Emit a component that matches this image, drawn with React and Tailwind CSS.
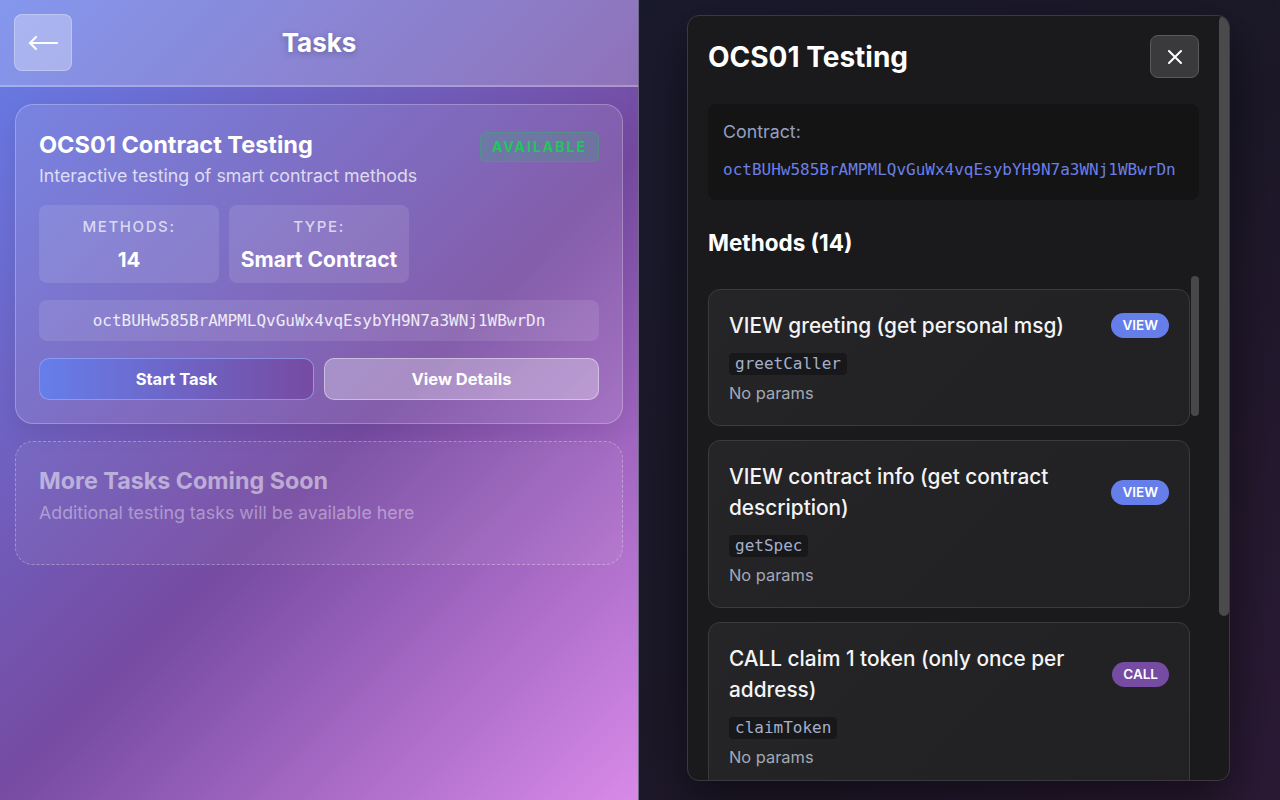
import React from "react";

function MethodCard({ title, badge, code }) {
  const isCall = badge === "CALL";
  return (
    <div className="shrink-0 rounded-[12px] border border-[#3b3b3e] bg-[linear-gradient(135deg,#252527,#212123)] px-[20px] pt-[20px] pb-[20px]">
      <div className="flex items-center gap-[16px]">
        <div className="min-w-0 flex-1 text-[20.8px] font-medium leading-[31px] text-[#f4f4f5]">{title}</div>
        <span
          className={
            "flex h-[25px] shrink-0 items-center rounded-full px-[11px] text-[13.5px] font-semibold text-white " +
            (isCall ? "bg-[#764ba2]" : "bg-[#667eea]")
          }
        >
          {badge}
        </span>
      </div>
      <div className="mt-[12px] flex">
        <span className="rounded-[4px] bg-[#18181a] px-[6px] font-['DejaVu_Sans_Mono',monospace] text-[16px] leading-[22px] text-[#a3b0cc]">
          {code}
        </span>
      </div>
      <div className="mt-[6px] text-[16.4px] leading-[24px] text-[#a3a9b6]">No params</div>
    </div>
  );
}

export default function App() {
  const addr = "octBUHw585BrAMPMLQvGuWx4vqEsybYH9N7a3WNj1WBwrDn";
  return (
    <div className="flex h-[800px] w-[1280px] overflow-hidden font-['Inter','Noto_Sans',sans-serif]">
      {/* Left panel */}
      <div className="flex w-[638px] shrink-0 flex-col bg-[linear-gradient(135deg,#667eea_0%,#764ba2_55%,#d98ae9_100%)]">
        <header className="flex h-[87px] shrink-0 items-center border-b-2 border-white/25 bg-white/20 px-[14px]">
          <button className="flex h-[57px] w-[58px] items-center justify-center rounded-[8px] border border-white/25 bg-white/30">
            <svg width="30" height="16" viewBox="0 0 30 16" fill="none" stroke="white" strokeWidth="2.2" strokeLinecap="round" strokeLinejoin="round">
              <path d="M29 8H2" />
              <path d="M8 2L2 8L8 14" />
            </svg>
          </button>
          <h1 className="flex-1 text-center text-[26px] font-bold leading-[34px] text-white [text-shadow:0_2px_6px_rgba(0,0,0,0.25)]">
            Tasks
          </h1>
          <div className="w-[58px]" />
        </header>

        <div className="flex flex-col gap-[17px] px-[15px] pt-[17px]">
          {/* Task card */}
          <div className="rounded-[18px] border border-white/25 bg-white/10 px-[23px] pt-[25px] pb-[23px] shadow-[0_8px_24px_rgba(0,0,0,0.08)]">
            <div className="flex items-start justify-between">
              <div>
                <h2 className="text-[23.5px] font-bold leading-[30px] text-white">OCS01 Contract Testing</h2>
                <p className="mt-[4px] text-[17.8px] leading-[24px] text-white/75">
                  Interactive testing of smart contract methods
                </p>
              </div>
              <span className="mt-[2px] rounded-[6px] border border-[#22c55e]/30 bg-[#22c55e]/20 px-[11px] py-[4px] text-[14px] font-bold leading-[20px] tracking-[2px] text-[#22c55e]">
                AVAILABLE
              </span>
            </div>

            <div className="mt-[17px] flex gap-[10px]">
              <div className="flex h-[78px] w-[180px] flex-col items-center rounded-[8px] bg-white/10 pt-[12px]">
                <div className="text-[15px] font-medium leading-[20px] tracking-[1.6px] text-white/70">METHODS:</div>
                <div className="mt-[9px] text-[20.5px] font-bold leading-[28px] text-white">14</div>
              </div>
              <div className="flex h-[78px] w-[180px] flex-col items-center rounded-[8px] bg-white/10 pt-[12px]">
                <div className="text-[15px] font-medium leading-[20px] tracking-[1.6px] text-white/70">TYPE:</div>
                <div className="mt-[9px] text-[21px] font-bold leading-[28px] text-white">Smart Contract</div>
              </div>
            </div>

            <div className="mt-[17px] flex h-[41px] items-center justify-center rounded-[8px] bg-white/10 font-['DejaVu_Sans_Mono',monospace] text-[16px] text-white/85">
              {addr}
            </div>

            <div className="mt-[17px] flex gap-[10px]">
              <button className="flex h-[42px] flex-1 items-center justify-center rounded-[10px] border border-[#9aa8ff]/70 bg-[linear-gradient(90deg,#667eea,#764ba2)] text-[16.5px] font-bold text-white">
                Start Task
              </button>
              <button className="flex h-[42px] flex-1 items-center justify-center rounded-[10px] border border-white/40 bg-white/30 text-[16.5px] font-bold text-white">
                View Details
              </button>
            </div>
          </div>

          {/* Coming soon card */}
          <div className="h-[124px] rounded-[18px] border border-dashed border-white/30 bg-white/5 px-[23px] pt-[24px]">
            <h2 className="text-[23.3px] font-bold leading-[30px] text-white/50">More Tasks Coming Soon</h2>
            <p className="mt-[5px] text-[17.8px] leading-[24px] text-white/40">
              Additional testing tasks will be available here
            </p>
          </div>
        </div>
      </div>

      {/* Divider */}
      <div className="w-px shrink-0 bg-[#716b8a]" />

      {/* Right panel */}
      <div className="flex flex-1 items-start bg-[linear-gradient(135deg,#1a1a2d_0%,#1c1828_50%,#2c1a35_100%)] pl-[48px] pt-[15px]">
        <div className="flex h-[766px] w-[543px] overflow-hidden rounded-[12px] border border-[#3a3a3c] bg-[#1a191b] shadow-[0_20px_50px_rgba(0,0,0,0.5)]">
          <div className="flex min-w-0 flex-1 flex-col px-[20px] pt-[19px]">
            <div className="flex items-center justify-between">
              <h2 className="text-[28px] font-bold leading-[34px] text-white">OCS01 Testing</h2>
              <button className="flex h-[43px] w-[49px] items-center justify-center rounded-[8px] border border-[#5a5a5c] bg-[#3a3a3c]">
                <svg width="14" height="14" viewBox="0 0 14 14" stroke="white" strokeWidth="2" strokeLinecap="round">
                  <path d="M1 1L13 13M13 1L1 13" />
                </svg>
              </button>
            </div>

            <div className="mt-[26px] shrink-0 rounded-[8px] bg-[#141415] px-[15px] pt-[16px] pb-[18px]">
              <div className="text-[17.8px] leading-[24px] text-[#95a0c2]">Contract:</div>
              <div className="mt-[14px] font-['DejaVu_Sans_Mono',monospace] text-[16px] leading-[24px] text-[#6b7fe6]">
                {addr}
              </div>
            </div>

            <h3 className="mt-[29px] text-[22.5px] font-bold leading-[28px] text-white">Methods (14)</h3>

            <div className="mt-[19px] flex">
              <div className="flex w-[482px] shrink-0 flex-col gap-[14px] pt-[13px]">
                <MethodCard title="VIEW greeting (get personal msg)" badge="VIEW" code="greetCaller" />
                <MethodCard title="VIEW contract info (get contract description)" badge="VIEW" code="getSpec" />
                <MethodCard title="CALL claim 1 token (only once per address)" badge="CALL" code="claimToken" />
              </div>
              <div className="ml-[1px] w-[8px]">
                <div className="h-[140px] rounded-full bg-[#48484a]" />
              </div>
            </div>
          </div>
          <div className="w-[10px] shrink-0">
            <div className="h-[600px] rounded-[5px] bg-[#4a4a4c]" />
          </div>
        </div>
      </div>
    </div>
  );
}
